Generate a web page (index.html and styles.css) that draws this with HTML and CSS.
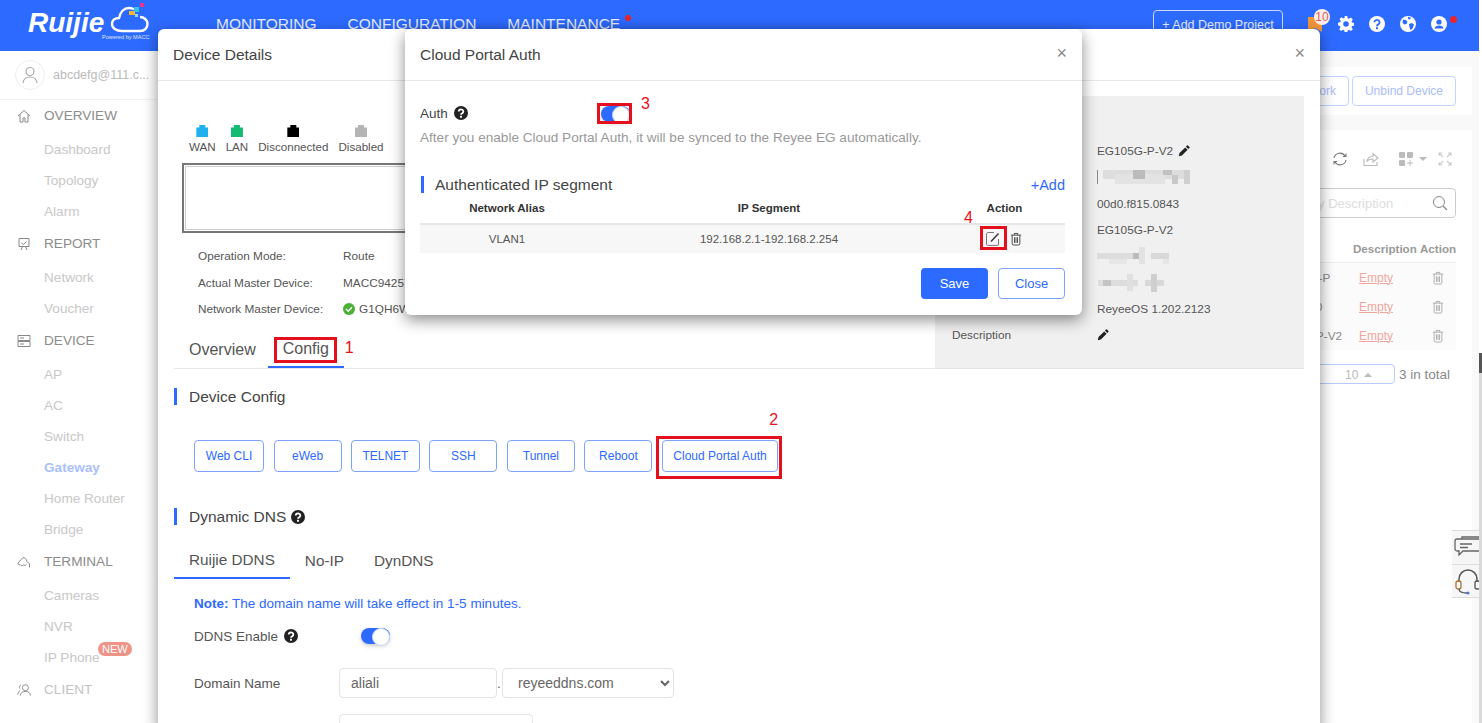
FILE: index.html
```html
<!DOCTYPE html>
<html lang="en">
<head>
  <meta charset="UTF-8">
  <meta name="viewport" content="width=device-width, initial-scale=1.0">
  <title>Cloud Portal Auth</title>
  <link rel="stylesheet" href="styles.css">
</head>
<body>

  <!-- Shared icons -->
  <svg class="sprite" width="0" height="0">
    <symbol id="i-help" viewBox="0 0 16 16">
      <circle cx="8" cy="8" r="8" fill="#222"/>
      <path d="M5.300 6.200a2.700 2.400 0 1 1 4 2.200c-.9.500-1.300.9-1.300 1.700" fill="none" stroke="#fff" stroke-width="2"/>
      <rect x="6.900" y="11.200" width="2.200" height="2.200" fill="#fff"/>
    </symbol>
    <symbol id="i-pencil" viewBox="0 0 16 16">
      <path d="M1 15l1-4.200 7.600-7.600 3.200 3.200L5.200 14zM10.600 2.200l1.400-1.400a1 1 0 0 1 1.400 0l1.800 1.800a1 1 0 0 1 0 1.400l-1.400 1.400z" fill="#222"/>
    </symbol>
    <symbol id="i-trash" viewBox="0 0 14 16">
      <path d="M1 3.500h12M5 3.500V1.500h4v2M2.500 3.500v10.200c0 .7.500 1.300 1.200 1.300h6.600c.7 0 1.200-.6 1.200-1.300V3.500M5.200 6v6.600M7 6v6.600M8.800 6v6.600" fill="none" stroke="currentColor" stroke-width="1.100"/>
    </symbol>
  </svg>

  <div class="app">
    <div class="app-content">
      <header class="topbar">
        <div class="logo">
          <span class="logo-word">Ruijie</span>
          <svg class="logo-cloud" width="40" height="30" viewBox="0 0 40 30">
            <path d="M12 28H30C35 28 37.500 24.500 37.500 21C37.500 17 34 14 30 14M12 28C6 28 2 25 2 21C2 17 5 15 9 15C10 9 14 5 19 5C21 5 23 5.500 24 6.500" fill="none" stroke="#fff" stroke-width="2.400"/>
            <rect x="19" y="8" width="6" height="4" fill="#f5b82e"/>
            <rect x="24" y="4" width="5" height="5" fill="#35c3ee"/>
            <rect x="30" y="0" width="4" height="4" fill="#e8368f"/>
            <rect x="25" y="11" width="3" height="3" fill="#8fd8f5"/>
          </svg>
          <span class="logo-sub">Powered by MACC</span>
        </div>
        <nav class="topnav">
          <a>MONITORING</a>
          <a>CONFIGURATION</a>
          <a class="has-dot">MAINTENANCE</a>
        </nav>
        <div class="topbar-right">
          <button class="demo-btn">+ Add Demo Project</button>
          <div class="bell">
            <svg width="14" height="15" viewBox="0 0 14 15"><path d="M0 0h14v15l-7-4-7 4z" fill="#f0963c"/></svg>
            <span class="bell-count">10</span>
          </div>
          <svg class="top-icon" viewBox="0 0 16 16"><path d="M6.700 0h2.600l.4 2.200 1.300.6 1.900-1.300 1.900 1.900-1.300 1.900.6 1.300 2.200.4v2.600l-2.200.4-.6 1.300 1.300 1.900-1.900 1.900-1.900-1.300-1.300.6-.4 2.200H6.700l-.4-2.200-1.300-.6-1.900 1.300-1.900-1.900 1.300-1.900-.6-1.300L0 9.300V6.700l2.200-.4.6-1.300-1.300-1.900 1.900-1.900 1.900 1.300 1.300-.6zM8 5.200a2.800 2.800 0 1 0 0 5.600 2.800 2.800 0 0 0 0-5.600z" fill="#fff" fill-rule="evenodd"/></svg>
          <svg class="top-icon" viewBox="0 0 16 16"><circle cx="8" cy="8" r="8" fill="#fff"/><path d="M5.400 6.200a2.600 2.400 0 1 1 3.900 2.200c-1 .5-1.300 1-1.300 1.800" fill="none" stroke="#2d6aff" stroke-width="1.800"/><rect x="7" y="11.200" width="2" height="2" fill="#2d6aff"/></svg>
          <svg class="top-icon" viewBox="0 0 16 16"><circle cx="8" cy="8" r="8" fill="#fff"/><path d="M3 3.500l3 .5 1.500 2-1 2-2.500.5-1.500-2zM9 8l3-1 2 1.500-1.500 4-2 1.500-1-2.500zM8 1l3 .5-1 2-2-.5z" fill="#2d6aff"/></svg>
          <div class="user-icon">
            <svg class="top-icon" viewBox="0 0 16 16"><circle cx="8" cy="8" r="8" fill="#fff"/><circle cx="8" cy="6" r="2.600" fill="#2d6aff"/><path d="M3.500 12.500c.5-2.300 2.300-3 4.500-3s4 .7 4.500 3z" fill="#2d6aff"/></svg>
            <i class="dot"></i>
          </div>
        </div>
      </header>

      <div class="page">
        <aside class="sidebar">
          <div class="user-row">
            <span class="avatar">
              <svg width="16" height="18" viewBox="0 0 16 18"><circle cx="8" cy="5.500" r="4" fill="none" stroke="#aaa" stroke-width="1.200"/><path d="M1 17c.5-4 3-6 7-6s6.500 2 7 6" fill="none" stroke="#aaa" stroke-width="1.200"/></svg>
            </span>
            <span class="user-mail">abcdefg@111.c...</span>
          </div>
          <ul class="menu">
            <li class="menu-head">
              <svg width="14" height="14" viewBox="0 0 14 14"><path d="M1 7l6-5.500L13 7M3 5.500V13h3V9h2v4h3V5.500" fill="none" stroke="#888"/></svg>
              OVERVIEW
            </li>
            <li class="menu-item">Dashboard</li>
            <li class="menu-item">Topology</li>
            <li class="menu-item">Alarm</li>
            <li class="menu-head">
              <svg width="14" height="14" viewBox="0 0 14 14"><path d="M2 1.500h10v8H2zM4 13l1.500-3.500M10 13L8.500 9.500M4.500 6l2 1.500 3-3" fill="none" stroke="#888"/></svg>
              REPORT
            </li>
            <li class="menu-item">Network</li>
            <li class="menu-item">Voucher</li>
            <li class="menu-head">
              <svg width="14" height="14" viewBox="0 0 14 14"><path d="M1 1.500h12v5H1zM1 7.500h12v5H1zM3 4h4M3 10h4" fill="none" stroke="#888"/></svg>
              DEVICE
            </li>
            <li class="menu-item">AP</li>
            <li class="menu-item">AC</li>
            <li class="menu-item">Switch</li>
            <li class="menu-item active">Gateway</li>
            <li class="menu-item">Home Router</li>
            <li class="menu-item">Bridge</li>
            <li class="menu-head">
              <svg width="14" height="14" viewBox="0 0 14 14"><path d="M1 8l5-5.500c2 0 3.500 1.500 4 4l2.500 2.500v3.500M1 8c0 1.500 1 2 2 1.500 1 1.500 2.500 1.500 3.500.5 1 .5 2.500.5 3-.5" fill="none" stroke="#888"/></svg>
              TERMINAL
            </li>
            <li class="menu-item">Cameras</li>
            <li class="menu-item">NVR</li>
            <li class="menu-item">IP Phone<span class="new-tag">NEW</span></li>
            <li class="menu-head menu-head-light">
              <svg width="14" height="14" viewBox="0 0 15 14"><circle cx="9" cy="4.500" r="3.200" fill="none" stroke="#888"/><path d="M3.500 13c.3-3 2.500-4.500 5.500-4.500s5.200 1.500 5.500 4.500M4.500 1.500C3 2 2.500 3.500 3 5.500M1 12c0-2 .8-3.500 2.500-4.500" fill="none" stroke="#888"/></svg>
              CLIENT
            </li>
          </ul>
        </aside>

        <main class="main">
          <div class="card card-actions">
            <button class="btn-ghost">Move to Network</button>
            <button class="btn-ghost">Unbind Device</button>
          </div>
          <div class="card card-table">
            <div class="tools">
              <svg width="16" height="16" viewBox="0 0 16 16"><path d="M2 7a6 6 0 0 1 11-2M14 9a6 6 0 0 1-11 2M11 5.500h3V2.500M5 10.500H2v3" fill="none" stroke="#777" stroke-width="1.100"/></svg>
              <svg width="16" height="16" viewBox="0 0 16 16"><path d="M1 8v6.500h13V11M4 10c.5-3 3-4.500 6-4.500V2.500l5 4.500-5 4V8c-2.500 0-4.500.5-6 2z" fill="none" stroke="#bbb" stroke-width="1.100"/></svg>
              <svg class="tool-grid" width="14" height="14" viewBox="0 0 14 14"><rect width="6" height="6" rx="1" fill="#bbb"/><rect x="8" width="6" height="6" rx="1" fill="#bbb"/><rect y="8" width="6" height="6" rx="1" fill="#bbb"/><path d="M8 11h6M11 8v6" stroke="#bbb"/></svg>
              <i class="caret"></i>
              <svg class="tool-full" width="14" height="14" viewBox="0 0 14 14"><path d="M1 4V1h3M10 1h3v3M1 10v3h3M13 10v3h-3M1 1l4 4M13 1L9 5M1 13l4-4M13 13L9 9" fill="none" stroke="#ccc" stroke-width="1.100"/></svg>
            </div>
            <div class="search">
              <span>Search by Description</span>
              <svg width="16" height="16" viewBox="0 0 16 16"><circle cx="7" cy="7" r="5.500" fill="none" stroke="#888"/><path d="M11 11l4 4" stroke="#888" stroke-width="1.300"/></svg>
            </div>
            <div class="dev-table">
              <div class="dev-row dev-row-head"><span>Model</span><span>Description</span><span>Action</span></div>
              <div class="dev-row"><span>EG1050G-P</span><a>Empty</a><svg class="row-trash" width="12" height="14"><use href="#i-trash"/></svg></div>
              <div class="dev-row"><span>EAP22000</span><a>Empty</a><svg class="row-trash" width="12" height="14"><use href="#i-trash"/></svg></div>
              <div class="dev-row"><span>EG105G-P-V2</span><a>Empty</a><svg class="row-trash" width="12" height="14"><use href="#i-trash"/></svg></div>
            </div>
            <div class="pager">
              <div class="page-size">10 <i class="caret-up"></i></div>
              <span>3 in total</span>
            </div>
          </div>
          <div class="side-tabs">
            <div class="side-tab">
              <svg width="26" height="24" viewBox="0 0 26 24"><path d="M8 4V2h18M1 6c0-1 .8-2 2-2h23v12H9l-4 4v-4H3c-1 0-2-1-2-2zM6 9h12M6 12.500h8" fill="none" stroke="#666" stroke-width="1.300"/></svg>
            </div>
            <div class="side-tab">
              <svg width="26" height="26" viewBox="0 0 26 26"><path d="M5 13V10a9 9 0 0 1 18 0v3" fill="none" stroke="#555" stroke-width="1.500"/><rect x="2" y="12" width="5" height="8" rx="2" fill="none" stroke="#a8743c" stroke-width="1.300"/><rect x="21" y="12" width="5" height="8" rx="2" fill="none" stroke="#555" stroke-width="1.300"/><path d="M5 20c0 3 3 4 8 4" fill="none" stroke="#555" stroke-width="1.300"/><circle cx="14" cy="24" r="1.500" fill="#4a78d0"/></svg>
            </div>
          </div>
        </main>
      </div>
    </div>
    <div class="scrollbar"><div class="scroll-thumb"></div><div class="scroll-rest"></div></div>
  </div>

  <!-- Device Details modal -->
  <section class="modal modal-device">
    <div class="modal-head">
      <h2>Device Details</h2>
      <span class="modal-close">×</span>
    </div>
    <div class="detail-top">
      <div class="detail-left">
        <div class="legend">
          <div class="legend-item"><i class="port port-wan"></i>WAN</div>
          <div class="legend-item"><i class="port port-lan"></i>LAN</div>
          <div class="legend-item"><i class="port port-off"></i>Disconnected</div>
          <div class="legend-item"><i class="port port-dis"></i>Disabled</div>
        </div>
        <div class="port-box"></div>
        <div class="info-row"><label>Operation Mode:</label><span>Route</span></div>
        <div class="info-row"><label>Actual Master Device:</label><span>MACC94257</span></div>
        <div class="info-row">
          <label>Network Master Device:</label>
          <span class="check-value">
            <svg width="12" height="12" viewBox="0 0 12 12"><circle cx="6" cy="6" r="6" fill="#4caf37"/><path d="M3 6l2.200 2.200L9 4.200" fill="none" stroke="#fff" stroke-width="1.400"/></svg>
            G1QH6W
          </span>
        </div>
        <div class="tabs detail-tabs">
          <a class="tab tab-overview">Overview</a>
          <a class="tab tab-on">
            <span class="marked">Config<i class="mark mark-config"></i><b class="mark-num num-1">1</b></span>
          </a>
        </div>
      </div>
      <div class="detail-panel">
        <div class="panel-row"><label></label><span>EG105G-P-V2</span><svg width="12" height="12"><use href="#i-pencil"/></svg></div>
        <div class="panel-row">
          <label></label>
          <svg width="93" height="14" shape-rendering="crispEdges">
            <rect y="0" width="1" height="14" fill="#888"/>
            <rect x="6" y="0" width="87" height="9" fill="#ddd"/>
            <rect x="18" y="4" width="50" height="10" fill="#e3e3e3"/>
            <rect x="36" y="0" width="12" height="9" fill="#bbb"/>
            <rect x="66" y="0" width="9" height="5" fill="#c0c0c0"/>
            <rect x="75" y="5" width="6" height="9" fill="#c8c8c8"/>
            <rect x="87" y="0" width="6" height="14" fill="#cfcfcf"/>
          </svg>
        </div>
        <div class="panel-row"><label></label><span>00d0.f815.0843</span></div>
        <div class="panel-row"><label></label><span>EG105G-P-V2</span></div>
        <div class="panel-row">
          <label></label>
          <svg width="72" height="18" shape-rendering="crispEdges">
            <rect y="6" width="46" height="6" fill="#ddd"/>
            <rect x="12" y="12" width="18" height="5" fill="#e6e6e6"/>
            <rect x="42" y="0" width="6" height="17" fill="#e2e2e2"/>
            <rect x="36" y="6" width="6" height="6" fill="#bbb"/>
            <rect x="54" y="6" width="18" height="6" fill="#d8d8d8"/>
            <rect x="66" y="12" width="6" height="5" fill="#e6e6e6"/>
          </svg>
        </div>
        <div class="panel-row">
          <label></label>
          <svg width="67" height="18" shape-rendering="crispEdges">
            <rect x="1" y="6" width="40" height="6" fill="#ddd"/>
            <rect x="6" y="6" width="8" height="6" fill="#c4c4c4"/>
            <rect x="30" y="0" width="6" height="17" fill="#e0e0e0"/>
            <rect x="48" y="6" width="19" height="6" fill="#d8d8d8"/>
            <rect x="54" y="0" width="6" height="18" fill="#cfcfcf"/>
          </svg>
        </div>
        <div class="panel-row"><label></label><span>ReyeeOS 1.202.2123</span></div>
        <div class="panel-row"><label>Description</label><svg width="12" height="12"><use href="#i-pencil"/></svg></div>
      </div>
    </div>

    <div class="section-title section-config">Device Config</div>
    <div class="config-btns">
      <button class="btn-line btn-cli">Web CLI</button>
      <button class="btn-line">eWeb</button>
      <button class="btn-line btn-telnet">TELNET</button>
      <button class="btn-line">SSH</button>
      <button class="btn-line">Tunnel</button>
      <button class="btn-line">Reboot</button>
      <span class="marked">
        <button class="btn-line btn-wide">Cloud Portal Auth</button>
        <i class="mark mark-portal"></i><b class="mark-num num-2">2</b>
      </span>
    </div>

    <div class="section-title section-dns">Dynamic DNS <svg width="14" height="14"><use href="#i-help"/></svg></div>
    <div class="tabs dns-tabs">
      <a class="tab tab-on">Ruijie DDNS</a>
      <a class="tab">No-IP</a>
      <a class="tab">DynDNS</a>
    </div>
    <p class="note"><b>Note:</b> The domain name will take effect in 1-5 minutes.</p>
    <div class="form-row form-row-ddns">
      <label>DDNS Enable <svg width="14" height="14"><use href="#i-help"/></svg></label>
      <span class="switch"></span>
    </div>
    <div class="form-row form-row-domain">
      <label>Domain Name</label>
      <input type="text" class="field field-name" value="aliali">
      <span class="field-dot">.</span>
      <select class="field field-suffix"><option>reyeeddns.com</option></select>
    </div>
    <div class="form-row form-row-next">
      <label></label>
      <input type="text" class="field field-next">
    </div>
  </section>

  <!-- Cloud Portal Auth modal -->
  <section class="modal modal-portal">
    <div class="modal-head">
      <h2>Cloud Portal Auth</h2>
      <span class="modal-close">×</span>
    </div>
    <div class="portal-body">
      <div class="auth-row">
        <label>Auth <svg width="14" height="14"><use href="#i-help"/></svg></label>
        <span class="marked">
          <span class="switch"></span>
          <i class="mark mark-switch"></i><b class="mark-num num-3">3</b>
        </span>
      </div>
      <p class="auth-hint">After you enable Cloud Portal Auth, it will be synced to the Reyee EG automatically.</p>
      <div class="segment-head">
        <div class="section-title">Authenticated IP segment</div>
        <a class="add-link">+Add</a>
      </div>
      <div class="ip-row ip-row-head"><span>Network Alias</span><span>IP Segment</span><span>Action</span></div>
      <div class="ip-row">
        <span>VLAN1</span>
        <span>192.168.2.1-192.168.2.254</span>
        <span class="ip-actions">
          <span class="marked">
            <svg class="edit-icon" width="14" height="14" viewBox="0 0 14 14"><path d="M12.500 7v5c0 .8-.6 1.400-1.400 1.400H2c-.8 0-1.500-.6-1.500-1.400V2C.5 1.200 1.200.5 2 .5h6" fill="none" stroke="#777"/><path d="M5 9.500L12.500 1.500" stroke="#333" stroke-width="1.300"/></svg>
            <i class="mark mark-edit"></i><b class="mark-num num-4">4</b>
          </span>
          <svg class="ip-trash" width="12" height="14"><use href="#i-trash"/></svg>
        </span>
      </div>
      <div class="portal-foot">
        <button class="btn-solid">Save</button>
        <button class="btn-line btn-close">Close</button>
      </div>
    </div>
  </section>

</body>
</html>
```

FILE: styles.css
```css
/* General Styles */
* {
  box-sizing: border-box;
}

html,
body {
  margin: 0;
  height: 100%;
  overflow: hidden;
}

body {
  font-family: "Liberation Sans", Arial, sans-serif;
  font-size: 13px;
  color: #555;
  background-color: #ffffff;
  position: relative;
}

h2,
p,
ul {
  margin: 0;
  padding: 0;
}

button {
  font-family: inherit;
  cursor: pointer;
}

.sprite {
  position: absolute;
}

.app {
  display: flex;
  height: 100%;
}

.app-content {
  flex: 1;
  min-width: 0;
  display: flex;
  flex-direction: column;
}

/* Fake page scrollbar */
.scrollbar {
  width: 3px;
  display: flex;
  flex-direction: column;
  padding-top: 353px;
}

.scroll-thumb {
  height: 20px;
  background-color: #555;
}

.scroll-rest {
  flex: 1;
  background-color: #dadada;
}

/* Top bar */
.topbar {
  height: 51px;
  flex-shrink: 0;
  background-color: #2d6aff;
  color: #fff;
  display: flex;
  padding-left: 28px;
}

.logo {
  position: relative;
  width: 188px;
  display: flex;
  align-items: flex-start;
  padding-top: 9px;
}

.logo-word {
  font-size: 28px;
  font-weight: bold;
  font-style: italic;
  line-height: 28px;
}

.logo-cloud {
  margin: -6px 0 0 6px;
}

.logo-sub {
  position: absolute;
  left: 74px;
  top: 34px;
  font-size: 5.600px;
  color: #dfe8ff;
}

.topnav {
  display: flex;
  gap: 31px;
  font-size: 15.500px;
  line-height: 47px;
  color: #e6edff;
}

.has-dot {
  position: relative;
}

.has-dot::after {
  content: "";
  position: absolute;
  left: 118px;
  top: 15px;
  width: 6px;
  height: 6px;
  border-radius: 50%;
  background-color: #e8262a;
}

.topbar-right {
  margin-left: auto;
  display: flex;
  align-items: flex-start;
  padding: 10px 32px 0 0;
}

.demo-btn {
  width: 130px;
  height: 30px;
  margin-right: 25px;
  background: none;
  border: 1px solid #c9d8ff;
  border-radius: 4px;
  color: #e6edff;
  font-size: 12.500px;
}

.bell {
  position: relative;
  width: 14px;
  margin: 7px 16px 0 0;
}

.bell-count {
  position: absolute;
  left: 6px;
  top: -8px;
  width: 16px;
  height: 16px;
  border-radius: 50%;
  background-color: #fdeeeb;
  color: #d9605a;
  font-size: 12px;
  line-height: 16px;
  text-align: center;
}

.top-icon {
  width: 16px;
  height: 16px;
  margin: 6px 15px 0 0;
  flex-shrink: 0;
}

.user-icon {
  position: relative;
  display: flex;
}

.user-icon .top-icon {
  margin-right: 0;
}

.dot {
  position: absolute;
  left: 19px;
  top: 6px;
  width: 7px;
  height: 7px;
  border-radius: 50%;
  background-color: #e8262a;
}

/* Sidebar */
.page {
  flex: 1;
  min-height: 0;
  display: flex;
}

.sidebar {
  width: 158px;
  flex-shrink: 0;
  background-color: #fff;
}

.user-row {
  height: 49px;
  padding-left: 15px;
  display: flex;
  align-items: center;
  gap: 8px;
  border-bottom: 1px solid #f3f3f3;
}

.avatar {
  width: 30px;
  height: 30px;
  border: 1px solid #eee;
  border-radius: 50%;
  display: flex;
  align-items: center;
  justify-content: center;
}

.user-mail {
  color: #bbb;
  font-size: 12.500px;
}

.menu {
  list-style: none;
  font-size: 13.600px;
}

.menu-head {
  height: 33px;
  margin-top: 2px;
  padding: 0 0 2px 17px;
  display: flex;
  align-items: center;
  gap: 13px;
  color: #8c8c8c;
}

.menu-head:first-child {
  margin-top: 0;
}

.menu-head-light {
  color: #c4c4c4;
}

.menu-item {
  position: relative;
  height: 31px;
  line-height: 33px;
  padding-left: 44px;
  color: #c8c8c8;
}

.menu-item.active {
  color: #a9c0ff;
  font-weight: bold;
}

.new-tag {
  position: absolute;
  left: 98px;
  top: 1px;
  height: 14px;
  padding: 0 4px;
  border-radius: 7px;
  background-color: #ee9388;
  color: #fff;
  font-size: 11px;
  line-height: 14px;
}

/* Main content behind the modals */
.main {
  position: relative;
  flex: 1;
  min-width: 0;
  padding: 16px 7px 0 0;
  background-color: #f9f9f9;
  display: flex;
  flex-direction: column;
  gap: 15px;
}

.card {
  background-color: #fff;
  padding-right: 16px;
}

.card-actions {
  height: 48px;
  display: flex;
  justify-content: flex-end;
  align-items: center;
  gap: 3px;
}

.btn-ghost {
  height: 30px;
  padding: 0 12px;
  white-space: nowrap;
  background: #fff;
  border: 1px solid #c3d3ff;
  border-radius: 4px;
  color: #a9bdfb;
  font-size: 12px;
}

.card-table {
  flex: 1;
  padding-top: 21px;
}

.tools {
  height: 16px;
  display: flex;
  justify-content: flex-end;
  align-items: center;
  gap: 15px;
  padding-right: 4px;
}

.tool-grid {
  margin-left: 5px;
}

.caret {
  width: 0;
  height: 0;
  margin-left: -9px;
  border: 4px solid transparent;
  border-top: 4px solid #bbb;
  border-bottom: 0;
}

.tool-full {
  margin-left: -4px;
}

.search {
  height: 30px;
  width: 200px;
  margin: 21px 0 0 auto;
  padding: 0 7px 0 9px;
  border: 1px solid #ccc;
  border-radius: 4px;
  display: flex;
  align-items: center;
  justify-content: space-between;
  color: #ddd;
  font-size: 13px;
}

.dev-table {
  width: 190px;
  margin: 16px 0 0 auto;
}

.dev-row {
  display: grid;
  grid-template-columns: 87px 67px 36px;
  align-items: center;
  height: 29px;
  background-color: #fbfbfb;
  color: #888;
  font-size: 11.800px;
}

.dev-row span {
  white-space: nowrap;
}

.dev-row a {
  color: #f0a6a0;
  text-decoration: underline;
  font-size: 12px;
  padding-left: 6px;
}

.dev-row-head {
  background-color: #fff;
  border-bottom: 1px solid #ededed;
  font-weight: bold;
  font-size: 11.600px;
  color: #999;
}

.row-trash {
  color: #aaa;
  justify-self: center;
}

.pager {
  margin: 14px 6px 0 0;
  display: flex;
  justify-content: flex-end;
  align-items: center;
  gap: 4px;
  color: #888;
  font-size: 13.500px;
}

.page-size {
  width: 130px;
  height: 20px;
  border: 1px solid #b9ccff;
  border-radius: 4px;
  line-height: 20px;
  color: #bbb;
  font-size: 12px;
  padding-left: 79px;
}

.caret-up {
  display: inline-block;
  width: 0;
  height: 0;
  margin-left: 2px;
  vertical-align: 2px;
  border: 4px solid transparent;
  border-bottom: 4px solid #bbb;
  border-top: 0;
}

.side-tabs {
  position: absolute;
  right: 0;
  top: 479px;
  width: 27px;
  overflow: hidden;
}

.side-tab {
  height: 34px;
  padding: 4px 0 0 2px;
  background-color: #f6f6f6;
  border-top: 1px solid #ddd;
}

.side-tab:last-child {
  border-bottom: 1px solid #ddd;
}

/* Modals */
.modal {
  position: absolute;
  top: 29px;
  background-color: #fff;
  border-radius: 6px;
  box-shadow: 0 5px 15px rgba(0, 0, 0, 0.45);
  overflow: hidden;
}

.modal-device {
  left: 158px;
  width: 1162px;
  height: 700px;
  border-radius: 6px 6px 0 0;
}

.modal-portal {
  left: 405px;
  width: 677px;
  height: 286px;
  overflow: visible;
}

.modal-head {
  height: 52px;
  padding: 0 15px;
  border-bottom: 1px solid #e8e8e8;
  display: flex;
  align-items: center;
  justify-content: space-between;
}

.modal-head h2 {
  font-size: 15.500px;
  font-weight: normal;
  color: #444;
}

.modal-close {
  font-size: 18px;
  color: #888;
  margin-top: -3px;
}

/* Red annotations from the guide */
.marked {
  position: relative;
  display: inline-flex;
}

.mark {
  position: absolute;
  border: 3px solid #e5101d;
  pointer-events: none;
}

.mark-num {
  position: absolute;
  color: #e5101d;
  font-size: 16px;
  font-weight: normal;
  line-height: 18px;
}

.mark-config {
  inset: -3px -8px -5px -9px;
}

.num-1 {
  left: 62px;
  top: -1px;
}

.mark-portal {
  inset: -4px -4px -7px -6px;
}

.num-2 {
  right: 0;
  top: -29px;
}

.mark-switch {
  inset: -3px -2px -2px -4px;
}

.num-3 {
  left: 40px;
  top: -11px;
}

.mark-edit {
  inset: -6px -7px -4px -6px;
}

.num-4 {
  left: -22px;
  top: -23px;
}

/* Device Details modal */
.detail-top {
  height: 288px;
  padding: 0 16px;
  display: flex;
}

.detail-left {
  flex: 1;
  min-width: 0;
  display: flex;
  flex-direction: column;
}

.legend {
  display: flex;
  gap: 10px;
  margin: 44px 0 0 15px;
}

.legend-item {
  display: flex;
  flex-direction: column;
  align-items: center;
  gap: 3px;
  font-size: 11.600px;
  line-height: 14px;
  color: #555;
}

.port {
  width: 12px;
  height: 12px;
  clip-path: polygon(25% 0, 75% 0, 75% 20%, 100% 20%, 100% 100%, 0 100%, 0 20%, 25% 20%);
}

.port-wan {
  background-color: #1fb0ee;
}

.port-lan {
  background-color: #12ba72;
}

.port-off {
  background-color: #000;
}

.port-dis {
  background-color: #b5b5b5;
}

.port-box {
  height: 70px;
  margin: 9px 10px 10px 8px;
  border: 2px solid #777;
  box-shadow: inset 0 0 0 1px #fff, inset 0 0 0 2px #ccc;
}

.info-row {
  height: 26.500px;
  margin-left: 24px;
  display: flex;
  align-items: center;
  font-size: 11.800px;
}

.info-row label {
  width: 145px;
}

.check-value {
  display: flex;
  align-items: center;
  gap: 4px;
}

.tabs {
  display: flex;
  font-size: 16px;
  color: #555;
}

.tab {
  height: 36px;
  display: flex;
  align-items: center;
  padding: 0 15px;
}

.tab-overview {
  padding-right: 12px;
}

.tab-on {
  border-bottom: 2px solid #2d6aff;
}

.detail-tabs {
  margin: auto -1px 0 0;
  border-bottom: 1px solid #e8e8e8;
}

.detail-panel {
  width: 369px;
  flex-shrink: 0;
  margin-top: 15px;
  padding: 42px 0 0 17px;
  background-color: #f0f0f0;
  border-bottom: 1px solid #e5e5e5;
}

.panel-row {
  height: 26.300px;
  display: flex;
  align-items: center;
  gap: 5px;
  font-size: 11.800px;
  color: #555;
}

.panel-row label {
  width: 140px;
}

.section-title {
  border-left: 3px solid #2d6aff;
  padding-left: 12px;
  height: 17px;
  line-height: 17px;
  font-size: 15.500px;
  color: #444;
  display: flex;
  align-items: center;
  gap: 5px;
}

.section-config {
  margin: 19px 0 0 16px;
}

.config-btns {
  display: flex;
  gap: 9.600px;
  margin: 35px 0 0 36px;
}

.btn-line {
  height: 32px;
  width: 68px;
  padding: 0;
  background-color: #fff;
  border: 1px solid #7ea3ff;
  border-radius: 4px;
  color: #2d6aff;
  font-size: 12px;
}

.btn-cli {
  width: 70px;
}

.btn-telnet {
  width: 68.500px;
}

.btn-wide {
  width: 116px;
}

.section-dns {
  margin: 36px 0 0 16px;
}

.dns-tabs {
  margin: 18px 0 0 16px;
  font-size: 15.300px;
}

.note {
  margin: 15px 0 0 36px;
  line-height: 20px;
  font-size: 13.500px;
  color: #2d6aff;
}

.form-row {
  display: flex;
  align-items: center;
  margin-left: 36px;
  font-size: 13.500px;
  height: 30px;
}

.form-row label {
  width: 145px;
  flex-shrink: 0;
  display: flex;
  align-items: center;
  gap: 6px;
}

.form-row-ddns {
  margin-top: 7px;
}

.form-row-ddns label {
  width: 167px;
}

.form-row-domain {
  margin-top: 17px;
}

.form-row-next {
  margin-top: 16px;
}

.field {
  height: 30px;
  border: 1px solid #e3e3e8;
  border-radius: 4px;
  background-color: #fff;
  font-family: inherit;
  font-size: 14px;
  color: #666;
  padding: 0 11px;
}

.field-name {
  width: 158px;
}

.field-dot {
  width: 5px;
}

.field-suffix {
  width: 172px;
}

.field-next {
  width: 194px;
}

/* Toggle switch */
.switch {
  position: relative;
  display: block;
  width: 29px;
  height: 16px;
  border-radius: 8px;
  background-color: #2d6aff;
  box-shadow: 0 2px 4px rgba(0, 0, 0, 0.2);
}

.switch::before {
  content: "";
  position: absolute;
  right: 0;
  top: 0;
  width: 16px;
  height: 16px;
  border-radius: 50%;
  background-color: #fff;
  border: 1px solid #c8d6f5;
}

/* Cloud Portal Auth modal */
.portal-body {
  padding: 24px 17px 0 15px;
}

.auth-row {
  height: 17px;
  display: flex;
  align-items: center;
  font-size: 13.500px;
  color: #444;
}

.auth-row label {
  width: 181px;
  display: flex;
  align-items: center;
  gap: 6px;
  margin-top: -1px;
}

.auth-hint {
  margin-top: 7px;
  line-height: 18px;
  font-size: 13.600px;
  color: #999;
}

.segment-head {
  margin-top: 29px;
  display: flex;
  justify-content: space-between;
  align-items: center;
}

.segment-head .section-title {
  margin-left: 1px;
  padding-left: 11px;
}

.add-link {
  color: #2d6aff;
  font-size: 14.500px;
}

.ip-row {
  display: grid;
  grid-template-columns: 174px 350px 121px;
  align-items: center;
  height: 28px;
  background-color: #f7f7f7;
  text-align: center;
  font-size: 11.500px;
  color: #555;
}

.ip-row-head {
  height: 32px;
  background-color: #fff;
  border-bottom: 2px solid #e6e6e6;
  font-weight: bold;
  color: #333;
}

.ip-actions {
  display: flex;
  justify-content: flex-start;
  align-items: center;
  gap: 10px;
  padding-left: 42px;
}

.edit-icon {
  display: block;
}

.ip-trash {
  color: #444;
}

.portal-foot {
  margin-top: 15px;
  display: flex;
  justify-content: flex-end;
  gap: 10px;
}

.btn-solid {
  width: 67px;
  height: 31px;
  background-color: #2d6aff;
  border: none;
  border-radius: 4px;
  color: #fff;
  font-size: 13px;
}

.btn-close {
  width: 67px;
  height: 31px;
  font-size: 13px;
}
```
